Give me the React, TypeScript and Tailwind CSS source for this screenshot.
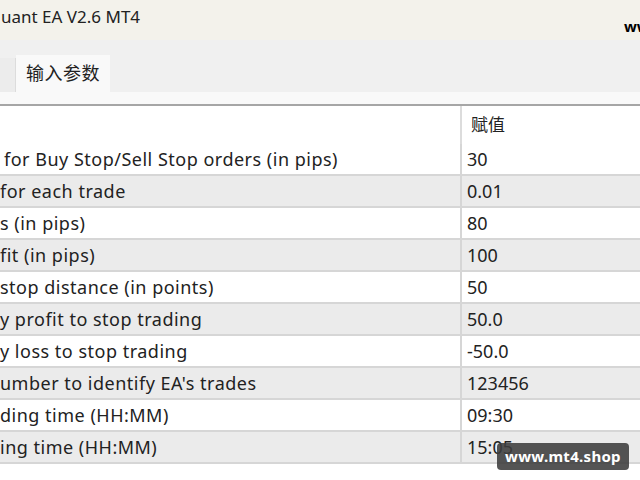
import React from "react";

const rows: { label: string; pad: number; value: string }[] = [
  { label: "for Buy Stop/Sell Stop orders (in pips)", pad: 4, value: "30" },
  { label: "for each trade", pad: 0, value: "0.01" },
  { label: "s (in pips)", pad: 0, value: "80" },
  { label: "fit (in pips)", pad: 0, value: "100" },
  { label: "stop distance (in points)", pad: 0, value: "50" },
  { label: "y profit to stop trading", pad: 0, value: "50.0" },
  { label: "y loss to stop trading", pad: 0, value: "-50.0" },
  { label: "umber to identify EA's trades", pad: 0, value: "123456" },
  { label: "ding time (HH:MM)", pad: 0, value: "09:30" },
  { label: "ing time (HH:MM)", pad: 0, value: "15:05" },
];

export default function App() {
  const font = {
    fontFamily: '"Noto Sans", "Noto Sans CJK SC", sans-serif',
  };
  return (
    <div
      className="relative w-[640px] h-[480px] overflow-hidden bg-white text-[#1a1a1a]"
      style={font}
    >
      {/* Title bar */}
      <div className="relative h-[40px] bg-[#f3f2eb] flex items-start">
        <span className="pl-[1px] pt-[5px] text-[17px] leading-[24px] text-[#222]">
          uant EA V2.6 MT4
        </span>
        <span className="absolute left-[624px] top-[17px] text-[15px] font-bold leading-[18px] text-black whitespace-nowrap">
          ww
        </span>
      </div>

      {/* Tab strip */}
      <div className="h-[66px] bg-[#f0f0f0] flex flex-col">
        <div className="h-[15px]" />
        <div className="flex items-end h-[37px]">
          <div className="w-[16px] h-[34px] bg-[#ececec] border-r border-[#dcdcdc]" />
          <div className="w-[94px] h-[37px] bg-[#f9f9f9] flex items-center justify-center text-[18px] tracking-[0.5px] text-[#222]">
            输入参数
          </div>
        </div>
        <div className="h-[12px] bg-[#f9f9f9]" />
        <div className="h-[2px] bg-[#a6a6a6]" />
      </div>

      {/* Table */}
      <div className="flex flex-col">
        <div className="flex h-[38px]">
          <div className="w-[460px]" />
          <div className="w-[2px] bg-[#dcdcdc]" />
          <div className="flex-1 flex items-center pl-[9px] text-[17px] text-[#222]">赋值</div>
        </div>
        {rows.map((r, i) => (
          <div
            key={i}
            className={
              "flex h-[32px] border-b-2 border-[#d6d6d6] " +
              (i % 2 === 1 ? "bg-[#ebebeb]" : "bg-white")
            }
          >
            <div
              className="w-[460px] flex items-center text-[18px] tracking-[0.5px] whitespace-nowrap overflow-hidden text-[#222]"
              style={{ paddingLeft: r.pad }}
            >
              {r.label}
            </div>
            <div className="w-[2px] bg-[#d6d6d6]" />
            <div className="flex-1 flex items-center pl-[5px] text-[18px] text-[#222]">
              {r.value}
            </div>
          </div>
        ))}
      </div>

      {/* Watermark */}
      <div className="absolute left-[497px] top-[443px] w-[132px] h-[27px] rounded-[4px] bg-[rgba(60,60,60,0.88)] flex items-center justify-center text-white font-bold text-[15px] tracking-[0.3px]">
        www.mt4.shop
      </div>
    </div>
  );
}
